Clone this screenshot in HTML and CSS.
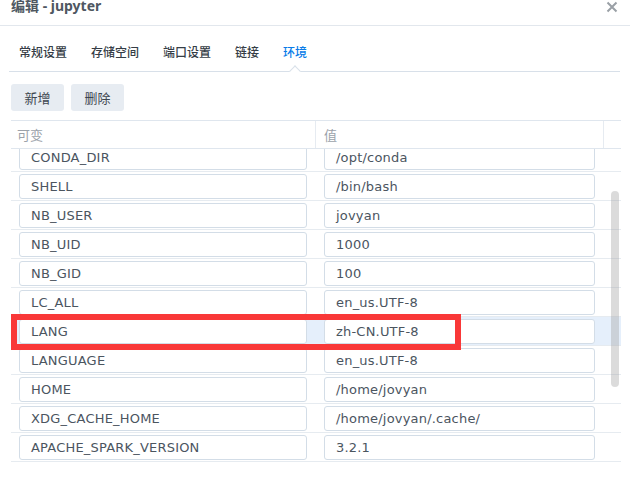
FILE: index.html
```html
<!DOCTYPE html>
<html lang="zh">
<head>
<meta charset="utf-8">
<link rel="stylesheet" href="styles.css">
</head>
<body>
<div class="dialog">
  <div class="header">
    <div class="title">编辑 - jupyter</div>
    <svg class="close" width="12" height="12" viewBox="0 0 12 12"><path d="M1.5 1.5L10.5 10.5M10.5 1.5L1.5 10.5" stroke="#9aa0a6" stroke-width="2" fill="none"/></svg>
  </div>
  <div class="tabs">
    <span class="tab">常规设置</span>
    <span class="tab">存储空间</span>
    <span class="tab">端口设置</span>
    <span class="tab">链接</span>
    <span class="tab active">环境</span>
  </div>
  <div class="toolbar">
    <button class="btn">新增</button>
    <button class="btn">删除</button>
  </div>
  <div class="grid">
    <div class="ghead">
      <div class="hcell c1">可变</div>
      <div class="hcell c2">值</div>
      <div class="hcell c3"></div>
    </div>
    <div class="gbody">
      <div class="rows">
        <div class="row"><div class="cell c1"><div class="inp">CONDA_DIR</div></div><div class="cell c2"><div class="inp">/opt/conda</div></div></div>
        <div class="row"><div class="cell c1"><div class="inp">SHELL</div></div><div class="cell c2"><div class="inp">/bin/bash</div></div></div>
        <div class="row"><div class="cell c1"><div class="inp">NB_USER</div></div><div class="cell c2"><div class="inp">jovyan</div></div></div>
        <div class="row"><div class="cell c1"><div class="inp">NB_UID</div></div><div class="cell c2"><div class="inp">1000</div></div></div>
        <div class="row"><div class="cell c1"><div class="inp">NB_GID</div></div><div class="cell c2"><div class="inp">100</div></div></div>
        <div class="row"><div class="cell c1"><div class="inp">LC_ALL</div></div><div class="cell c2"><div class="inp">en_us.UTF-8</div></div></div>
        <div class="row selected"><div class="cell c1"><div class="inp">LANG</div></div><div class="cell c2"><div class="inp">zh-CN.UTF-8</div></div></div>
        <div class="row"><div class="cell c1"><div class="inp">LANGUAGE</div></div><div class="cell c2"><div class="inp">en_us.UTF-8</div></div></div>
        <div class="row"><div class="cell c1"><div class="inp">HOME</div></div><div class="cell c2"><div class="inp">/home/jovyan</div></div></div>
        <div class="row"><div class="cell c1"><div class="inp">XDG_CACHE_HOME</div></div><div class="cell c2"><div class="inp">/home/jovyan/.cache/</div></div></div>
        <div class="row"><div class="cell c1"><div class="inp">APACHE_SPARK_VERSION</div></div><div class="cell c2"><div class="inp">3.2.1</div></div></div>
      </div>
      <div class="thumb"></div>
    </div>
  </div>
  <div class="mark"></div>
</div>
</body>
</html>
```

FILE: styles.css
```css
* { box-sizing: border-box; }
html, body { margin: 0; padding: 0; background: #fff; }
body {
  width: 630px;
  height: 488px;
  overflow: hidden;
  font-family: "DejaVu Sans", "Noto Sans CJK SC", sans-serif;
  color: #4f5963;
}
.dialog { position: relative; width: 630px; height: 488px; }
.header {
  height: 26px;
  border-bottom: 1px solid #e2e7ed;
  display: flex;
  justify-content: space-between;
  align-items: flex-start;
  padding: 0 12px 0 11px;
}
.title {
  font-family: "Noto Sans", "Noto Sans CJK SC", sans-serif;
  font-size: 14px;
  font-weight: bold;
  line-height: 14px;
  margin-top: -1px;
  color: #4f5761;
}
.close { margin-top: 1px; }
.tabs {
  margin: 0 10px 0 9px;
  height: 46px;
  border-bottom: 1px solid #d8e0e9;
  display: flex;
  align-items: flex-end;
  padding: 0 0 11px 10px;
  gap: 24px;
  position: relative;
}
.tab {
  font-family: "Noto Sans CJK SC", sans-serif;
  font-size: 12px;
  font-weight: 500;
  line-height: 16px;
  color: #353d46;
}
.tab.active { color: #0a7ce8; position: relative; }
.tab.active::after {
  content: "";
  position: absolute;
  left: 8px;
  bottom: -15px;
  width: 7px;
  height: 7px;
  background: #fff;
  border-top: 1px solid #d8e0e9;
  border-left: 1px solid #d8e0e9;
  transform: rotate(45deg);
}
.toolbar {
  display: flex;
  gap: 7px;
  padding: 12px 0 0 11px;
  height: 48px;
}
.btn {
  height: 27px;
  width: 53px;
  padding: 0;
  border: none;
  border-radius: 3px;
  background: #e7ecf2;
  font-family: "Noto Sans CJK SC", sans-serif;
  font-size: 13px;
  color: #3e4750;
}
.grid {
  margin-left: 11px;
  width: 610px;
}
.ghead {
  display: flex;
  height: 29px;
  border-top: 1px solid #dfe6ee;
  border-bottom: 1px solid #dfe6ee;
}
.hcell {
  font-family: "Noto Sans CJK SC", sans-serif;
  font-size: 13px;
  line-height: 27px;
  color: #9ba2aa;
  padding-left: 6px;
}
.c1 { width: 305px; }
.c2 { width: 288px; }
.c3 { width: 17px; }
.ghead .c1 { border-right: 1px solid #e6ebf1; }
.ghead .c2 { border-right: 1px solid #e6ebf1; padding-left: 8px; }
.gbody {
  position: relative;
  height: 320px;
  overflow: hidden;
}
.rows { margin-top: -6px; }
.row {
  display: flex;
  height: 29px;
  border-bottom: 1px solid #e6ebf0;
  width: 610px;
}
.row.selected { background: #e5effb; }
.cell { display: flex; align-items: flex-start; padding-top: 2px; }
.cell.c1 { padding-left: 8px; }
.cell.c2 { padding-left: 8px; }
.inp {
  height: 25px;
  border: 1px solid #d3dde7;
  border-radius: 3px;
  background: #fff;
  font-size: 13px;
  letter-spacing: 0.2px;
  line-height: 23px;
  padding-left: 11px;
  color: #4b555f;
  white-space: nowrap;
}
.c1 .inp { width: 288px; }
.c2 .inp { width: 271px; }
.thumb {
  position: absolute;
  left: 600px;
  top: 42px;
  width: 8px;
  height: 196px;
  border-radius: 4px;
  background: rgba(160,160,160,0.38);
}
.mark {
  position: absolute;
  left: 11px;
  top: 314px;
  width: 450px;
  height: 36px;
  border: 6px solid #f93838;
}
```
